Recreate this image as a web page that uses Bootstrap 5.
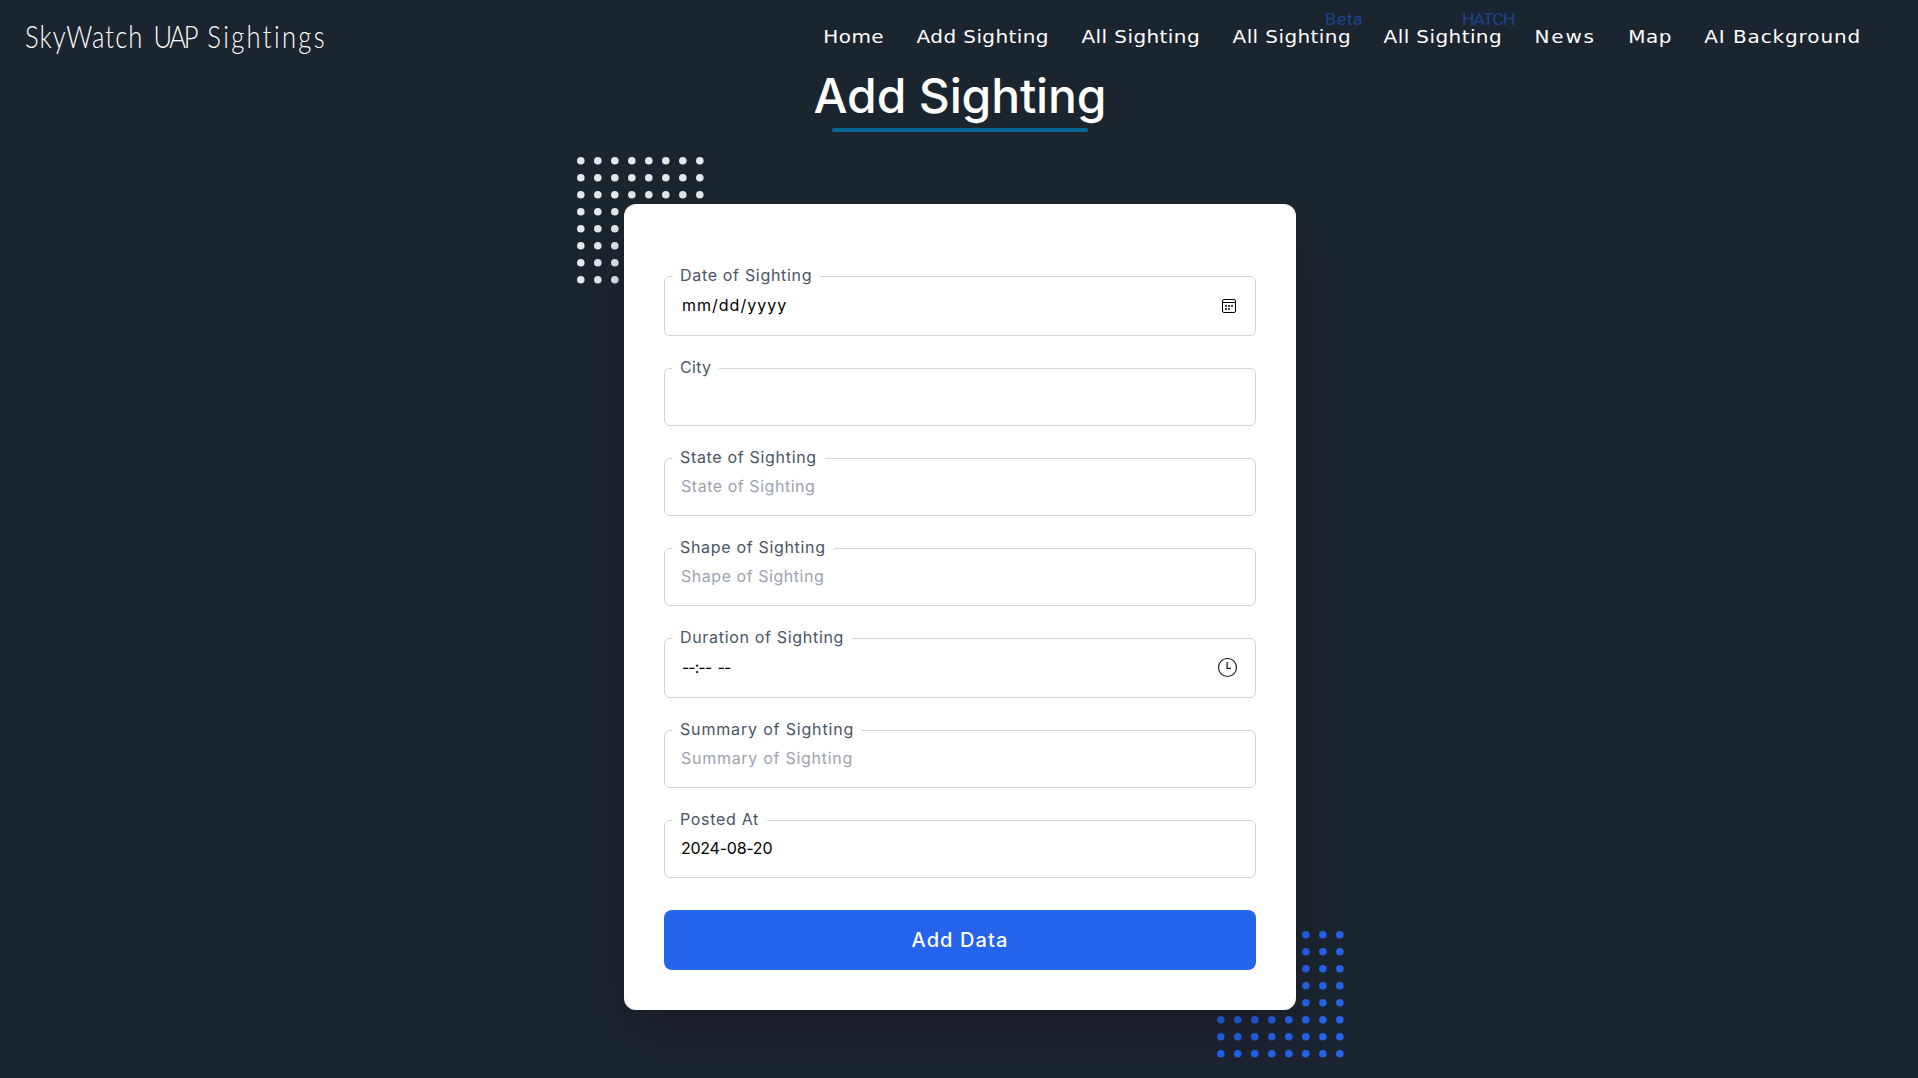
<!DOCTYPE html>
<html lang="en">
<head>
    <meta charset="UTF-8">
    <meta content="width=device-width, initial-scale=1.0" name="viewport">
    <title>SkyWatch UAP Sightings</title>
    <link href="https://cdn.jsdelivr.net/npm/bootstrap@5.3.0/dist/css/bootstrap.min.css" rel="stylesheet">
    <style>
        body {
            background: #1b2530;
            color: white;
            font-family: Inter, "Liberation Sans", sans-serif;
            min-height: 100vh;
            overflow: hidden;
        }
        .sky-nav {
            height: 68px;
            padding: 16px 57px 0 25px;
        }
        .sky-brand {
            font: 300 32px/40px Lato, sans-serif;
            color: white;
            transform: scaleX(.8);
            transform-origin: left;
            gap: 12.5px;
            white-space: nowrap;
        }
        .sky-brand span:nth-child(1) { letter-spacing: 1.3px; }
        .sky-brand span:nth-child(2) { letter-spacing: -2.9px; margin-right: 1.4px; }
        .sky-brand span:nth-child(3) { letter-spacing: 2.9px; }
        .sky-links {
            font: 18px/28px "DejaVu Sans", sans-serif;
            gap: 29.3px;
            padding-top: 7px;
            transform: scaleX(1.111);
            transform-origin: right;
        }
        .sky-links a {
            color: white;
            text-decoration: none;
            letter-spacing: .37px;
            white-space: nowrap;
        }
        .sky-links .wide-word { letter-spacing: 1.6px; }
        .sky-links .wide-phrase { letter-spacing: .8px; }
        .tag {
            position: absolute;
            top: -15px;
            right: -11px;
            font: 16px/24px Roboto, sans-serif;
            letter-spacing: .5px;
            color: #1d4291;
        }
        .tag-caps { letter-spacing: -1px; }
        .page-title {
            font: 500 48px/56px Inter, sans-serif;
            letter-spacing: -.15px;
        }
        .title-bar {
            width: 256px;
            height: 4px;
            margin-top: 4px;
            background: #036796;
        }
        .form-wrap {
            width: 672px;
            margin-top: 72px;
        }
        .dots {
            position: absolute;
            width: 127px;
            height: 127px;
        }
        .dots-top { left: -47px; top: -47px; color: #e5e7eb; }
        .dots-bottom { right: -48px; bottom: -48px; color: #2563eb; }
        .sheet {
            position: relative;
            background: white;
            border-radius: 12px;
            padding: 72px 40px 40px;
            box-shadow: 0 25px 50px -12px rgba(22, 10, 26, .4);
        }
        .field {
            position: relative;
            height: 58px;
            border: 1px solid #d1d5db;
            border-radius: 6px;
        }
        .field-tall { height: 60px; }
        .field label {
            position: absolute;
            top: -14.5px;
            left: 7px;
            padding: 0 8px;
            background: white;
            color: #4b5563;
            line-height: 24px;
            letter-spacing: .68px;
        }
        .field .short-label { letter-spacing: .3px; }
        .field .long-label { letter-spacing: .83px; }
        .field .form-control {
            border: none;
            background: none;
            color: black;
            height: 24px;
            padding: 0 16px;
            margin-top: 15px;
            line-height: 24px;
            letter-spacing: -.25px;
        }
        .field .form-control::placeholder {
            color: #9ca3af;
            letter-spacing: .54px;
        }
        .field #summary::placeholder { letter-spacing: .72px; }
        .field .date-part { letter-spacing: 1px; padding-left: 17px; margin-top: 16px; }
        .field .time-part { letter-spacing: -1px; word-spacing: 3px; padding-left: 17px; margin-top: 16px; }
        .btn-add {
            height: 60px;
            border-radius: 8px;
            background: #2563eb;
            color: white;
            font-size: 20px;
            font-weight: 500;
            letter-spacing: 1.1px;
        }
        .btn-add:hover {
            background: #1d4ed8;
            color: white;
        }
    </style>
</head>
<body>
    <nav class="sky-nav d-flex justify-content-between align-items-start">
        <a class="sky-brand d-inline-flex text-decoration-none" href="#"><span>SkyWatch</span><span>UAP</span><span>Sightings</span></a>
        <div class="sky-links d-flex">
            <a href="#">Home</a>
            <a href="#">Add Sighting</a>
            <a href="#">All Sighting</a>
            <a class="position-relative" href="#">All Sighting<span class="tag">Beta</span></a>
            <a class="position-relative" href="#">All Sighting<span class="tag tag-caps">HATCH</span></a>
            <a class="wide-word" href="#">News</a>
            <a href="#">Map</a>
            <a class="wide-phrase" href="#">AI Background</a>
        </div>
    </nav>

    <main class="d-flex flex-column align-items-center" style="padding-left: 2px">
        <h1 class="page-title m-0">Add Sighting</h1>
        <div class="title-bar rounded-pill"></div>

        <div class="form-wrap position-relative">
            <svg class="dots dots-top" viewBox="0 0 127 127" fill="currentColor">
                <pattern id="grid" width="17" height="17" patternUnits="userSpaceOnUse">
                    <circle cx="3.8" cy="3.8" r="3.8"/>
                </pattern>
                <rect width="127" height="127" fill="url(#grid)"/>
            </svg>
            <svg class="dots dots-bottom" viewBox="0 0 127 127" fill="currentColor">
                <pattern id="grid-blue" width="17" height="17" patternUnits="userSpaceOnUse">
                    <circle cx="3.8" cy="3.8" r="3.8"/>
                </pattern>
                <rect width="127" height="127" fill="url(#grid-blue)"/>
            </svg>

            <form class="sheet d-flex flex-column">
                <div class="d-flex flex-column" style="gap: 32px">
                    <div class="field field-tall d-flex">
                        <label for="date">Date of Sighting</label>
                        <input class="form-control date-part" id="date" type="text" value="mm/dd/yyyy">
                        <svg class="flex-shrink-0 align-self-center me-3" width="20" height="16" viewBox="0 0 20 16" fill="none">
                            <rect x="3.5" y="1.5" width="13" height="13" rx="1.5" stroke="black"/>
                            <path d="M4 4.5h12" stroke="black"/>
                            <path d="M6 7h2v2H6zM9 7h2v2H9zM12 7h2v2h-2zM6 10h2v2H6zM9 10h2v2H9z" fill="#444"/>
                        </svg>
                    </div>
                    <div class="field">
                        <label class="short-label" for="city">City</label>
                        <input class="form-control" id="city" type="text">
                    </div>
                    <div class="field">
                        <label for="state">State of Sighting</label>
                        <input class="form-control" id="state" type="text" placeholder="State of Sighting">
                    </div>
                    <div class="field">
                        <label for="shape">Shape of Sighting</label>
                        <input class="form-control" id="shape" type="text" placeholder="Shape of Sighting">
                    </div>
                    <div class="field field-tall d-flex">
                        <label for="duration">Duration of Sighting</label>
                        <input class="form-control time-part" id="duration" type="text" value="--:-- --">
                        <svg class="flex-shrink-0 align-self-center me-3" width="22" height="20" viewBox="0 0 22 20" fill="none" stroke="#222">
                            <circle cx="10.5" cy="9.5" r="9" stroke-width="1.2"/>
                            <path d="M10.1 4v6.4h3.9" stroke-width="1.3"/>
                        </svg>
                    </div>
                    <div class="field">
                        <label class="long-label" for="summary">Summary of Sighting</label>
                        <input class="form-control" id="summary" type="text" placeholder="Summary of Sighting">
                    </div>
                    <div class="field">
                        <label for="posted">Posted At</label>
                        <input class="form-control" id="posted" type="text" value="2024-08-20">
                    </div>
                    <button class="btn btn-add w-100" type="button">Add Data</button>
                </div>
            </form>
        </div>
    </main>
    <script src="https://cdn.jsdelivr.net/npm/bootstrap@5.3.0/dist/js/bootstrap.bundle.min.js"></script>
</body>
</html>
